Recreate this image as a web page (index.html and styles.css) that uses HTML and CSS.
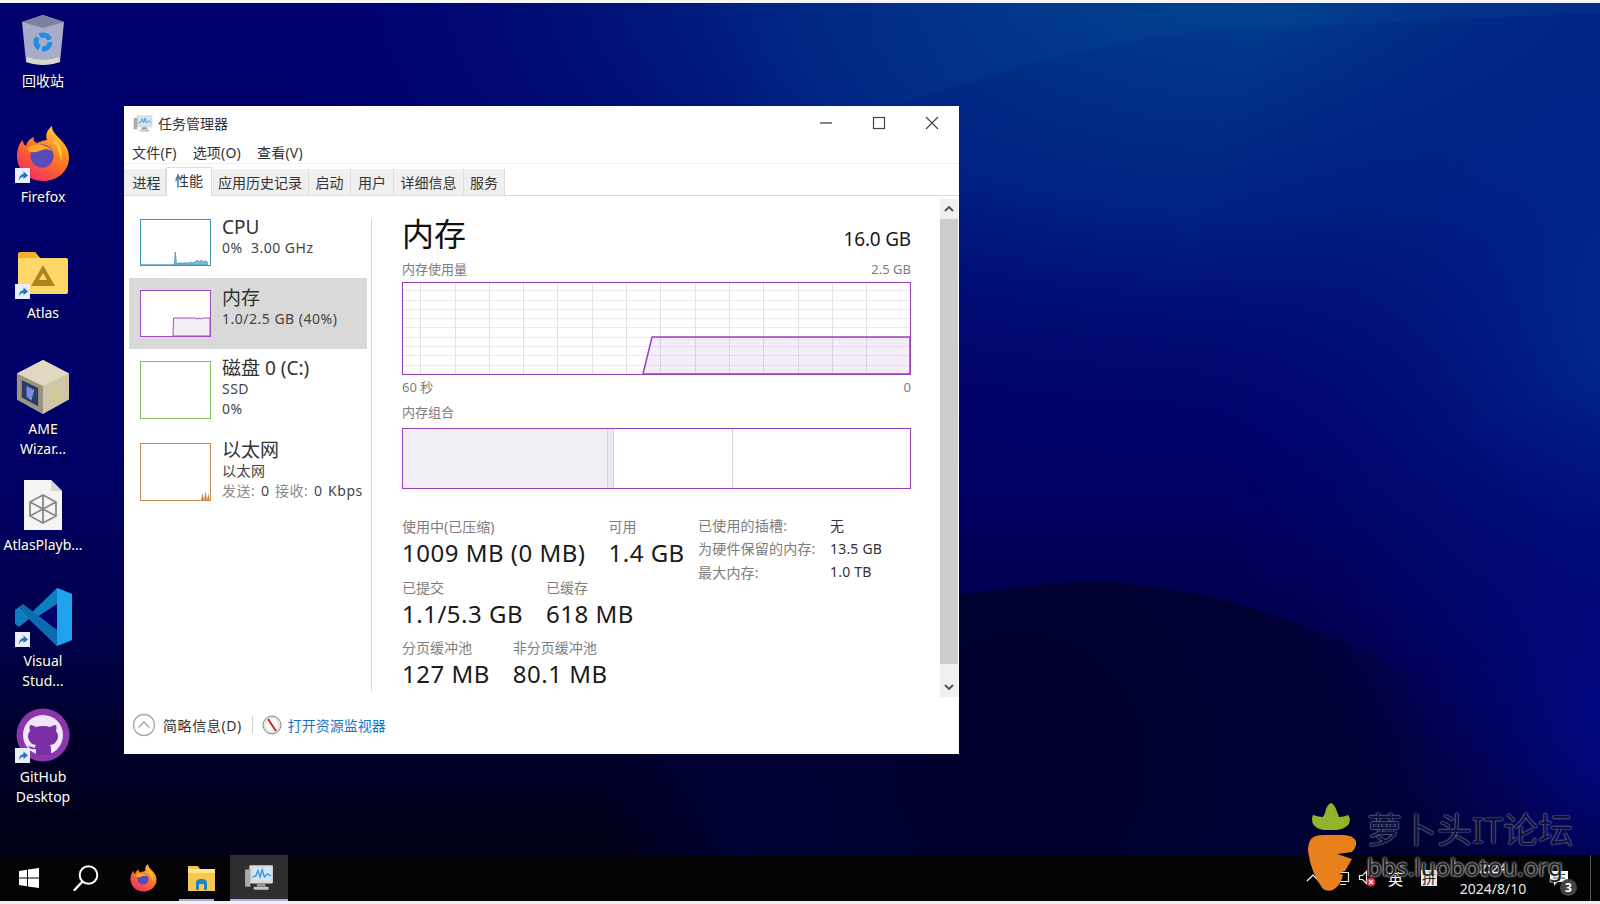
FILE: index.html
```html
<!DOCTYPE html>
<html lang="zh-CN">
<head>
  <meta charset="UTF-8">
  <title>任务管理器</title>
  <link rel="stylesheet" href="styles.css">
</head>
<body>
  <svg class="defs" width="0" height="0">
    <symbol id="shortcut" viewBox="0 0 15 15">
      <rect width="15" height="15" fill="#e8eef6"/>
      <path d="M4 12.500c0-4 1.500-6 4.500-6.500V3.500L13 7.500 8.500 11V8.500C6.500 8.800 5 10 4 12.500z" fill="#1f6fc4"/>
    </symbol>
    <symbol id="firefox" viewBox="0 0 54 56">
      <defs>
        <linearGradient id="ffBody" x1="0.8" y1="0" x2="0.2" y2="1">
          <stop offset="0" stop-color="#ffd23c"/>
          <stop offset="0.45" stop-color="#ff7a1f"/>
          <stop offset="1" stop-color="#f0246a"/>
        </linearGradient>
      </defs>
      <path d="M27 55C12 55 1 44 1 30c0-8 3-14 6-16 0 3 1 5 3 6 1-5 5-8 8-9-1 3 0 5 3 6 4-2 8-3 10-3-2-5 0-10 5-14 0 5 3 8 8 13 5 5 9 11 9 18 0 14-11 24-26 24z" fill="url(#ffBody)"/>
      <circle cx="26" cy="30" r="11.500" fill="#5b4bb8"/>
      <path d="M11 22c4-3 10-4 15-3 5 1 8 3 10 6-4-2-7-2-10-1-3 1-7 3-11 2-2 0-3-2-4-4z" fill="#ffa62e"/>
      <path d="M40 14c5 6 7 12 5 21-1-8-3-14-8-18z" fill="#ffcb3a"/>
    </symbol>
    <symbol id="explorer" viewBox="0 0 27 26">
      <path d="M0 1h10l2 3h15v22H0z" fill="#f3c94f"/>
      <rect y="4" width="27" height="4" fill="#ffe58a"/>
      <path d="M8 25v-7c0-3 2-4 5.500-4s5.500 1 5.500 4v7h-3v-6h-5v6z" fill="#1d86c8"/>
    </symbol>
    <symbol id="taskmon" viewBox="0 0 28 28">
      <rect x="5" y="3" width="22" height="17" rx="1" fill="#d8dadc"/>
      <rect x="8" y="5" width="17" height="12" fill="#cfe6f6"/>
      <path d="M8 14l3-1 2-5 2 6 2-7 2 7 3-3 3 2" fill="none" stroke="#3c8fd0" stroke-width="1.200"/>
      <rect x="12" y="20" width="8" height="3" fill="#999"/>
      <rect x="9" y="23" width="14" height="3" rx="1" fill="#c4c4c4"/>
      <rect x="1" y="7" width="5" height="16" fill="#a8aaac"/>
    </symbol>
  </svg>

  <div class="strip"></div>

  <main class="desktop">
    <svg class="wallpaper" viewBox="0 0 1600 852" preserveAspectRatio="none">
      <defs>
        <linearGradient id="wpBase" x1="0" y1="0" x2="0" y2="1">
          <stop offset="0" stop-color="#00006e"/>
          <stop offset="0.52" stop-color="#00006a"/>
          <stop offset="0.72" stop-color="#000050"/>
          <stop offset="0.86" stop-color="#00002c"/>
          <stop offset="1" stop-color="#000016"/>
        </linearGradient>
        <radialGradient id="wpTop" gradientUnits="userSpaceOnUse" cx="1250" cy="-40" r="1000" gradientTransform="matrix(1 0 0 0.5 0 -15)">
          <stop offset="0" stop-color="#004290"/>
          <stop offset="0.5" stop-color="#002a88" stop-opacity="0.8"/>
          <stop offset="1" stop-color="#000a70" stop-opacity="0"/>
        </radialGradient>
        <radialGradient id="wpRight" gradientUnits="userSpaceOnUse" cx="1680" cy="320" r="500">
          <stop offset="0" stop-color="#003498"/>
          <stop offset="1" stop-color="#000a78" stop-opacity="0"/>
        </radialGradient>
        <radialGradient id="wpCorner" gradientUnits="userSpaceOnUse" cx="1640" cy="720" r="340">
          <stop offset="0" stop-color="#000a8c"/>
          <stop offset="1" stop-color="#000078" stop-opacity="0"/>
        </radialGradient>
        <radialGradient id="wpDark" gradientUnits="userSpaceOnUse" cx="1020" cy="760" r="420">
          <stop offset="0" stop-color="#00002e"/>
          <stop offset="0.7" stop-color="#000034"/>
          <stop offset="1" stop-color="#000040" stop-opacity="0"/>
        </radialGradient>
        <linearGradient id="wpSwoosh" gradientUnits="userSpaceOnUse" x1="700" y1="0" x2="1000" y2="0">
          <stop offset="0" stop-color="#06589c" stop-opacity="0"/>
          <stop offset="1" stop-color="#06589c" stop-opacity="0.16"/>
        </linearGradient>
      </defs>
      <rect width="1600" height="852" fill="url(#wpBase)"/>
      <rect width="1600" height="852" fill="url(#wpTop)"/>
      <rect width="1600" height="852" fill="url(#wpRight)"/>
      <rect width="1600" height="852" fill="url(#wpCorner)"/>
      <path d="M700 180Q1000 50 1200 28L1600 10V0H700z" fill="url(#wpSwoosh)"/>
      <path d="M600 700Q860 590 1090 578Q1260 585 1420 680V852H600z" fill="url(#wpDark)"/>
    </svg>

    <div class="icons">
      <div class="icon">
        <div class="icon-pic">
          <svg width="46" height="52" viewBox="0 0 46 52">
            <path d="M2 8L23 1l21 7-4 40q-17 6-34 0z" fill="#a8acc8"/>
            <path d="M2 8L23 1l21 7-21 6z" fill="#7d80a0"/>
            <path d="M7 43q16 6 32 0l1 5q-17 6-34 0z" fill="#d8d8cc"/>
            <circle cx="23" cy="28" r="7" fill="none" stroke="#1f8fe0" stroke-width="5" stroke-dasharray="12 2.700"/>
          </svg>
        </div>
        <div class="icon-label">回收站</div>
      </div>
      <div class="icon">
        <div class="icon-pic"><svg width="54" height="56"><use href="#firefox"/></svg></div>
        <svg class="short"><use href="#shortcut"/></svg>
        <div class="icon-label">Firefox</div>
      </div>
      <div class="icon">
        <div class="icon-pic raised">
          <svg width="50" height="42" viewBox="0 0 50 42">
            <path d="M0 3q0-3 3-3h14l5 6h26q2 0 2 2v32q0 2-2 2H2q-2 0-2-2z" fill="#ffd668"/>
            <path d="M0 3q0-3 3-3h14l5 6H0z" fill="#f2b02e"/>
            <path d="M25 13l12 21H13zM25 21l-4 7h8z" fill="#a8861c" fill-rule="evenodd"/>
          </svg>
        </div>
        <svg class="short"><use href="#shortcut"/></svg>
        <div class="icon-label">Atlas</div>
      </div>
      <div class="icon">
        <div class="icon-pic">
          <svg width="54" height="54" viewBox="0 0 54 56">
            <path d="M27 0l27 14v27L27 56 0 41V14z" fill="#cfc5a8"/>
            <path d="M0 14L27 0l27 14-27 13z" fill="#e0d8c2"/>
            <path d="M0 14l27 13v29L0 41z" fill="#9c9480"/>
            <path d="M5 21l17 8v19L5 39z" fill="#2c3a66"/>
            <path d="M10 27l8 4-3 11-5-4z" fill="#7d8be0"/>
            <path d="M34 38l10-8M38 42l8-6" stroke="#d8d06a" stroke-width="2"/>
          </svg>
        </div>
        <div class="icon-label">AME<br>Wizar...</div>
      </div>
      <div class="icon">
        <div class="icon-pic">
          <svg width="38" height="50" viewBox="0 0 38 50">
            <path d="M0 0h27l11 11v39H0z" fill="#f4f5f3"/>
            <path d="M27 0l11 11H27z" fill="#d2d6d8"/>
            <path d="M19 15l13 7v14l-13 7-13-7V22zM6 22l13 7 13-7M19 29v14M6 36l26-14M32 36L6 22M19 15v14" fill="none" stroke="#8a8a8a" stroke-width="1.800"/>
          </svg>
        </div>
        <div class="icon-label">AtlasPlayb...</div>
      </div>
      <div class="icon">
        <div class="icon-pic">
          <svg width="57" height="58" viewBox="0 0 57 58">
            <path d="M42 0L14 27 4 19l-4 3v14l4 3 10-8 28 27 15-6V6z" fill="#0f7dc2"/>
            <path d="M42 0l15 6v46l-15 6z" fill="#20a3ef"/>
            <path d="M42 16v26L22 29z" fill="#00006a"/>
            <path d="M4 19l4-3 34 26v16L14 31z" fill="#0b6cb0"/>
          </svg>
        </div>
        <svg class="short"><use href="#shortcut"/></svg>
        <div class="icon-label">Visual<br>Stud...</div>
      </div>
      <div class="icon">
        <div class="icon-pic">
          <svg width="54" height="54" viewBox="0 0 54 54">
            <circle cx="27" cy="27" r="26.500" fill="#8c36ae"/>
            <circle cx="27" cy="27" r="20" fill="#f0e6f6"/>
            <path d="M20 47v-6q-6 1-8-3 4 1 7 2 0-2 1-3-7-1-8-8 0-4 2-6-1-3 0-6 3 0 6 2 3-1 7-1t7 1q3-2 6-2 1 3 0 6 2 2 2 6-1 7-8 8 1 1 1 4v6z" fill="#7a30a4"/>
          </svg>
        </div>
        <svg class="short"><use href="#shortcut"/></svg>
        <div class="icon-label">GitHub<br>Desktop</div>
      </div>
    </div>

    <section class="window">
      <header class="titlebar">
        <svg class="app-icon" width="20" height="20"><use href="#taskmon"/></svg>
        <span class="app-name">任务管理器</span>
        <div class="winbtn">
          <svg width="14" height="14" viewBox="0 0 14 14"><path d="M1 7h12" stroke="#333" stroke-width="1.200"/></svg>
        </div>
        <div class="winbtn">
          <svg width="14" height="14" viewBox="0 0 14 14"><rect x="1.500" y="1.500" width="11" height="11" fill="none" stroke="#444" stroke-width="1.200"/></svg>
        </div>
        <div class="winbtn">
          <svg width="14" height="14" viewBox="0 0 14 14"><path d="M1 1l12 12M13 1L1 13" stroke="#444" stroke-width="1.200"/></svg>
        </div>
      </header>

      <nav class="menu">
        <span>文件(F)</span><span>选项(O)</span><span>查看(V)</span>
      </nav>

      <div class="tabs">
        <span class="tab tab-first">进程</span>
        <span class="tab active">性能</span>
        <span class="tab tab-apphist">应用历史记录</span>
        <span class="tab tab-startup">启动</span>
        <span class="tab tab-users">用户</span>
        <span class="tab tab-details">详细信息</span>
        <span class="tab tab-services">服务</span>
      </div>

      <div class="perf">
        <div class="sidebar">
          <div class="item">
            <div class="thumb thumb-cpu">
              <svg viewBox="0 0 69 45" preserveAspectRatio="none"><path d="M0 45h33l.5-1 .800-12 1 10 1 2 1-1h11l1-1 2 1 3-1 2-2 2 2 2-2 2 2 2-1 2 1v3z" fill="#7db8d8" stroke="#3f93bd" stroke-width="0.800"/></svg>
            </div>
            <div class="item-text">
              <div class="item-name">CPU</div>
              <div class="item-sub">0%&nbsp; 3.00 GHz</div>
            </div>
          </div>
          <div class="item selected">
            <div class="thumb thumb-mem">
              <svg viewBox="0 0 69 45" preserveAspectRatio="none"><path d="M32 45l.500-18H54l2 1 2-1 2 1 2-1h7v18z" fill="#f2eef4" stroke="#a04cc0" stroke-width="1"/></svg>
            </div>
            <div class="item-text">
              <div class="item-name">内存</div>
              <div class="item-sub">1.0/2.5 GB (40%)</div>
            </div>
          </div>
          <div class="item">
            <div class="thumb thumb-disk tall"></div>
            <div class="item-text">
              <div class="item-name">磁盘 0 (C:)</div>
              <div class="item-sub">SSD</div>
              <div class="item-sub">0%</div>
            </div>
          </div>
          <div class="item">
            <div class="thumb thumb-net tall">
              <svg viewBox="0 0 69 56" preserveAspectRatio="none"><path d="M60 56l1.500-7 1.500 7 1.500-9 1.500 9 1.500-7 1 7z" fill="#c88a50"/></svg>
            </div>
            <div class="item-text">
              <div class="item-name">以太网</div>
              <div class="item-sub">以太网</div>
              <div class="item-sub net-rate"><span class="muted">发送:</span> 0 <span class="muted">接收:</span> 0 Kbps</div>
            </div>
          </div>
        </div>

        <div class="sep"></div>

        <div class="main">
          <div class="head">
            <h1>内存</h1>
            <span class="total">16.0 GB</span>
          </div>
          <div class="cap">
            <span>内存使用量</span><span>2.5 GB</span>
          </div>
          <div class="chart">
            <svg viewBox="0 0 507 91" preserveAspectRatio="none"><path d="M240 91L249 54H507V91z" fill="#a67cc0" fill-opacity="0.14" stroke="#9b3fb8" stroke-width="1.500"/></svg>
          </div>
          <div class="cap axis">
            <span>60 秒</span><span>0</span>
          </div>
          <div class="cap title2">
            <span>内存组合</span>
          </div>
          <div class="combo">
            <div class="seg used"></div>
            <div class="seg modified"></div>
            <div class="seg standby"></div>
            <div class="seg free"></div>
          </div>

          <div class="stats">
            <div class="stats-left">
              <div class="stat-row">
                <div class="stat"><div class="stat-label">使用中(已压缩)</div><div class="stat-value">1009 MB (0 MB)</div></div>
                <div class="stat"><div class="stat-label">可用</div><div class="stat-value">1.4 GB</div></div>
              </div>
              <div class="stat-row">
                <div class="stat"><div class="stat-label">已提交</div><div class="stat-value">1.1/5.3 GB</div></div>
                <div class="stat"><div class="stat-label">已缓存</div><div class="stat-value">618 MB</div></div>
              </div>
              <div class="stat-row">
                <div class="stat"><div class="stat-label">分页缓冲池</div><div class="stat-value">127 MB</div></div>
                <div class="stat"><div class="stat-label">非分页缓冲池</div><div class="stat-value">80.1 MB</div></div>
              </div>
            </div>
            <div class="specs">
              <span class="spec-k">已使用的插槽:</span><span class="spec-v">无</span>
              <span class="spec-k">为硬件保留的内存:</span><span class="spec-v">13.5 GB</span>
              <span class="spec-k">最大内存:</span><span class="spec-v">1.0 TB</span>
            </div>
          </div>
        </div>

        <div class="scrollbar">
          <div class="sb-btn">
            <svg width="10" height="6" viewBox="0 0 10 6"><path d="M1 5l4-4 4 4" fill="none" stroke="#555" stroke-width="2"/></svg>
          </div>
          <div class="sb-thumb"></div>
          <div class="sb-btn">
            <svg width="10" height="6" viewBox="0 0 10 6"><path d="M1 1l4 4 4-4" fill="none" stroke="#555" stroke-width="2"/></svg>
          </div>
        </div>
      </div>

      <footer class="foot">
        <svg width="24" height="24" viewBox="0 0 24 24"><circle cx="12" cy="12" r="10.500" fill="#fff" stroke="#a8a8a8" stroke-width="1.300"/><path d="M6.500 14.500L12 9l5.500 5.500" fill="none" stroke="#a8a8a8" stroke-width="1.500"/></svg>
        <span class="foot-less">简略信息(D)</span>
        <span class="foot-sep"></span>
        <svg width="20" height="20" viewBox="0 0 20 20"><circle cx="10" cy="10" r="9" fill="#e4e4e0" stroke="#8a8a8a"/><circle cx="10" cy="10" r="6.500" fill="#fbfbf8"/><path d="M6 4l8 12" stroke="#c42a2a" stroke-width="2"/></svg>
        <a class="foot-link">打开资源监视器</a>
      </footer>
    </section>
  </main>

  <div class="taskbar">
    <div class="task">
      <svg width="20" height="20" viewBox="0 0 20 20"><path d="M0 3l8-1.200V9.500H0zM9 1.600L20 0v9.500H9zM0 10.500h8v7.700L0 17zM9 10.500h11V20L9 18.400z" fill="#fff"/></svg>
    </div>
    <div class="task">
      <svg width="28" height="28" viewBox="0 0 28 28"><circle cx="16.500" cy="11" r="8.800" fill="none" stroke="#fff" stroke-width="2"/><path d="M10.500 17.500L2.500 26" stroke="#fff" stroke-width="2.400" stroke-linecap="round"/></svg>
    </div>
    <div class="task"><svg width="27" height="28"><use href="#firefox"/></svg></div>
    <div class="task open"><svg width="27" height="26"><use href="#explorer"/></svg></div>
    <div class="task running"><svg width="30" height="30"><use href="#taskmon"/></svg></div>

    <div class="tray">
      <div class="tray-cell cell-chevron">
        <svg width="14" height="8" viewBox="0 0 14 8"><path d="M1 7l6-6 6 6" fill="none" stroke="#fff" stroke-width="1.200"/></svg>
      </div>
      <div class="tray-cell cell-net">
        <svg width="16" height="16" viewBox="0 0 16 16"><path d="M3.500 2.500h11v9h-11zM6 14.500h6" fill="none" stroke="#eee" stroke-width="1.200"/></svg>
      </div>
      <div class="tray-cell cell-sound">
        <svg width="20" height="18" viewBox="0 0 20 18"><path d="M1.500 6.500h3l4-4v12l-4-4h-3z" fill="none" stroke="#eee" stroke-width="1.200"/><circle cx="13" cy="13" r="4.500" fill="#e02a3a"/><path d="M11 11l4 4M15 11l-4 4" stroke="#fff" stroke-width="1.300"/></svg>
      </div>
      <div class="tray-cell cell-lang">英</div>
      <div class="tray-cell cell-ime"><span class="ime-box">拼</span></div>
      <div class="tray-cell clock">
        <span>2:24</span>
        <span>2024/8/10</span>
      </div>
      <div class="tray-cell notify">
        <svg width="18" height="15" viewBox="0 0 18 15"><path d="M0 0h18v11H7l-3 4v-4H0z" fill="#fff"/><path d="M3 3.500h12M3 7h12" stroke="#333"/></svg>
        <span class="badge">3</span>
      </div>
    </div>
  </div>

  <div class="strip bottom"></div>

  <div class="watermark">
    <svg class="carrot" width="50" height="90" viewBox="0 0 50 90">
      <path d="M6 12q6 2 10 2 2-3 3-8 2-5 5-6 3 1 5 6 2 5 3 8 5 0 9-2 3 3 1 9-4 5-12 6H17Q9 26 6 21q-2-5 0-9z" fill="#8fb52a"/>
      <path d="M4 36q4-4 12-4h20q10 0 13 6 1 6-4 11L30 51l15 5-7 12-6 2 4 2q-2 10-10 15-6 2-10-1Q4 70 1 48q0-8 3-12z" fill="#e8801e"/>
    </svg>
    <div class="wm-text">
      <div class="wm-title">萝卜头IT论坛</div>
      <div class="wm-url">bbs.luobotou.org</div>
    </div>
  </div>
</body>
</html>
```

FILE: styles.css
```css
* {
  box-sizing: border-box;
}
body {
  margin: 0;
  height: 904px;
  width: 1600px;
  overflow: hidden;
  display: flex;
  flex-direction: column;
  font-family: "Noto Sans", "Noto Sans CJK SC", sans-serif;
  font-size: 14px;
  background: #fff;
  color: #1a1a1a;
}
.defs {
  position: absolute;
}
.strip {
  height: 3px;
  background: #f4f5fa;
}
.strip.bottom {
  flex: 1;
  height: auto;
  background: #f0f0f0;
}

/* desktop */
.desktop {
  position: relative;
  height: 852px;
  overflow: hidden;
}
.wallpaper {
  position: absolute;
  inset: 0;
  width: 100%;
  height: 100%;
}
.icons {
  position: relative;
  width: 86px;
  padding-top: 5px;
  display: flex;
  flex-direction: column;
}
.icon {
  position: relative;
  height: 116px;
  display: flex;
  flex-direction: column;
  align-items: center;
}
.icon-pic {
  height: 60px;
  display: flex;
  align-items: flex-end;
  justify-content: center;
  padding-bottom: 2px;
}
.icon-pic.raised {
  padding-bottom: 6px;
}
.short {
  position: absolute;
  left: 15px;
  top: 44px;
  width: 15px;
  height: 15px;
}
.icon-label {
  margin-top: 3px;
  color: #fff;
  text-align: center;
  line-height: 19.500px;
  white-space: nowrap;
  text-shadow: 0 1px 2px #000;
}

/* task manager window */
.window {
  position: absolute;
  left: 124px;
  top: 103px;
  width: 835px;
  height: 648px;
  background: #fff;
  display: flex;
  flex-direction: column;
  box-shadow: 0 0 1px rgba(0,0,0,0.6);
}
.titlebar {
  height: 34px;
  display: flex;
  align-items: center;
  padding: 0 1px 0 9px;
}
.app-name {
  margin-left: 5px;
  margin-right: auto;
  color: #333;
  font-size: 14px;
}
.winbtn {
  width: 53px;
  height: 34px;
  display: flex;
  align-items: center;
  justify-content: center;
}
.menu {
  height: 24px;
  display: flex;
  align-items: center;
  gap: 16px;
  padding-left: 8px;
  letter-spacing: 0.2px;
  border-bottom: 1px solid #f0f0f0;
  color: #333;
  white-space: nowrap;
}
.tabs {
  height: 32px;
  display: flex;
  align-items: flex-end;
  border-bottom: 1px solid #dcdcdc;
  white-space: nowrap;
}
.tab {
  height: 26px;
  line-height: 27px;
  text-align: center;
  background: #f0f0f0;
  border-right: 1px solid #dcdcdc;
  color: #333;
}
.tab.active {
  width: 46px;
  height: 29px;
  margin-bottom: -1px;
  line-height: 25px;
  background: #fff;
  border: 1px solid #dcdcdc;
  border-bottom: 0;
}
.tab-first { width: 42px; padding-left: 4px; }
.tab-apphist { width: 97px; }
.tab-startup { width: 42px; }
.tab-users { width: 43px; }
.tab-details { width: 70px; }
.tab-services { width: 41px; }

.perf {
  height: 501px;
  display: flex;
}
.sidebar {
  width: 238px;
  margin-left: 5px;
  padding-top: 11px;
}
.item {
  display: flex;
  gap: 11px;
  padding: 12px 0 12px 11px;
  white-space: nowrap;
}
.item.selected {
  background: #d9d9d9;
}
.thumb {
  width: 71px;
  height: 47px;
  background: #fff;
  border: 1.500px solid #888;
}
.thumb svg {
  display: block;
  width: 100%;
  height: 100%;
}
.thumb.tall {
  height: 58px;
}
.thumb-cpu { border-color: #3f93bd; }
.thumb-mem { border-color: #a04cc0; }
.thumb-disk { border-color: #7fbf5f; }
.thumb-net { border-color: #c88a50; }
.item-text {
  margin-top: -3px;
}
.thumb.tall + .item-text {
  margin-top: -4px;
}
.item-name {
  font-size: 19px;
  line-height: 22px;
  color: #333;
}
.item-sub {
  line-height: 20px;
  letter-spacing: 0.5px;
  color: #444;
}
.net-rate {
  word-spacing: 1.500px;
}
.muted {
  color: #8a8a8a;
}
.sep {
  width: 1px;
  margin: 23px 0 6px 4px;
  background: #d6d6d6;
}
.main {
  width: 539px;
  padding: 15px 0 0 30px;
}
.head {
  display: flex;
  justify-content: space-between;
  align-items: center;
  width: 509px;
  height: 49px;
}
.head h1 {
  margin: 0 0 3px;
  font-size: 32px;
  font-weight: 400;
  line-height: 46px;
  color: #111;
}
.total {
  font-size: 19px;
  letter-spacing: -0.2px;
  margin-top: 7px;
  color: #1a1a1a;
}
.cap {
  width: 509px;
  display: flex;
  justify-content: space-between;
  font-size: 13px;
  line-height: 18px;
  color: #7d7d7d;
  white-space: nowrap;
}
.chart {
  width: 509px;
  height: 93px;
  margin-top: 4px;
  border: 1px solid #9b3fb8;
  background-color: #fff;
  background-image:
    repeating-linear-gradient(90deg, transparent 0 33.300px, #e4dee8 33.300px 34.300px),
    repeating-linear-gradient(0deg, transparent 0 8.300px, #eee9f1 8.300px 9.300px);
  background-position: -16px 0, 0 0;
}
.chart svg {
  display: block;
  width: 100%;
  height: 100%;
}
.axis {
  margin-top: 3px;
}
.title2 {
  margin-top: 7px;
}
.combo {
  width: 509px;
  height: 61px;
  margin-top: 7px;
  display: flex;
  border: 1px solid #9b3fb8;
}
.seg {
  border-right: 1px solid #d6cfdc;
}
.used {
  width: 205px;
  background: #f2eff4;
}
.modified {
  width: 6px;
  background: #ece6f0;
}
.standby {
  width: 119px;
}
.free {
  flex: 1;
  border-right: 0;
}
.stats {
  display: flex;
  margin-top: 28px;
  width: 509px;
}
.stats-left {
  width: 296px;
  flex: none;
}
.stat-row {
  display: flex;
  gap: 23px;
  height: 60.500px;
}
.stat {
  white-space: nowrap;
}
.stat-label {
  line-height: 19px;
  color: #7d7d7d;
}
.stat-value {
  font-size: 24px;
  letter-spacing: 0.5px;
  line-height: 33px;
  color: #1a1a1a;
}
.specs {
  display: grid;
  grid-template-columns: 132px auto;
  grid-auto-rows: 23.500px;
  align-items: center;
  align-self: flex-start;
  margin-top: -4px;
  letter-spacing: 0.2px;
  white-space: nowrap;
}
.spec-k {
  color: #7d7d7d;
}
.spec-v {
  color: #333;
}
.scrollbar {
  width: 18px;
  margin-left: 29px;
  margin-top: 3px;
  display: flex;
  flex-direction: column;
  background: #f0f0f0;
}
.sb-btn {
  height: 20px;
  display: flex;
  align-items: center;
  justify-content: center;
}
.sb-btn:last-child {
  height: 33px;
  align-items: flex-end;
  padding-bottom: 7px;
}
.sb-thumb {
  flex: 1;
  background: #cdcdcd;
}
.foot {
  flex: 1;
  display: flex;
  align-items: center;
  padding: 0 0 2px 8px;
}
.foot-less {
  margin-left: 7px;
  letter-spacing: 0.6px;
  color: #333;
}
.foot-sep {
  width: 1px;
  height: 17px;
  margin: 0 9px 0 10px;
  background: #d0d0d0;
}
.foot-link {
  margin-left: 6px;
  color: #1474c8;
}

/* watermark over the corner */
.watermark {
  position: absolute;
  left: 1305px;
  top: 800px;
  display: flex;
}
.carrot {
  position: absolute;
  left: 2px;
  top: 3px;
}
.wm-text {
  margin-left: 62px;
  white-space: nowrap;
}
.wm-title {
  font-size: 35px;
  line-height: 38px;
  margin-top: 11px;
  color: #0c1238;
  text-shadow: 0 0 1px #9aa4d0, 0 0 2px #6c78b0;
}
.wm-url {
  font-size: 24px;
  line-height: 30px;
  color: #1c1c1c;
  text-shadow: 0 0 2px #eee, 0 0 3px #bbb;
  margin-top: 3px;
}

/* taskbar */
.taskbar {
  position: relative;
  height: 46px;
  display: flex;
  background: #040406;
  color: #fff;
}
.task {
  position: relative;
  width: 57.500px;
  display: flex;
  align-items: center;
  justify-content: center;
}
.task.running {
  background: #2e2e30;
  border-bottom: 2px solid #a8b0e0;
}
.task.open::after {
  content: "";
  position: absolute;
  left: 6px;
  right: 16px;
  bottom: 0;
  height: 2px;
  background: #a8b0e0;
}
.tray {
  margin-left: auto;
  width: 303px;
  display: flex;
  border-right: 8px solid #040406;
}
.tray-cell {
  display: flex;
  align-items: center;
  justify-content: center;
  font-size: 15px;
  flex: none;
}
.cell-chevron { width: 31px; }
.cell-net { width: 28px; }
.cell-sound { width: 24px; }
.cell-lang { width: 31px; }
.cell-ime { width: 36px; }
.ime-box {
  width: 16px;
  height: 16px;
  background: #e8e8e8;
  color: #222;
  font-size: 14px;
  line-height: 16px;
  text-align: center;
}
.clock {
  width: 92px;
  flex-direction: column;
  font-size: 14px;
  line-height: 21px;
  color: #e8e8e8;
}
.notify {
  position: relative;
  width: 52px;
  justify-content: flex-start;
  padding-left: 11px;
  border-right: 1px solid #555;
}
.badge {
  position: absolute;
  left: 21px;
  top: 24px;
  width: 17px;
  height: 17px;
  border-radius: 50%;
  background: #444;
  color: #fff;
  font-size: 12px;
  font-weight: 700;
  line-height: 17px;
  text-align: center;
}
```
